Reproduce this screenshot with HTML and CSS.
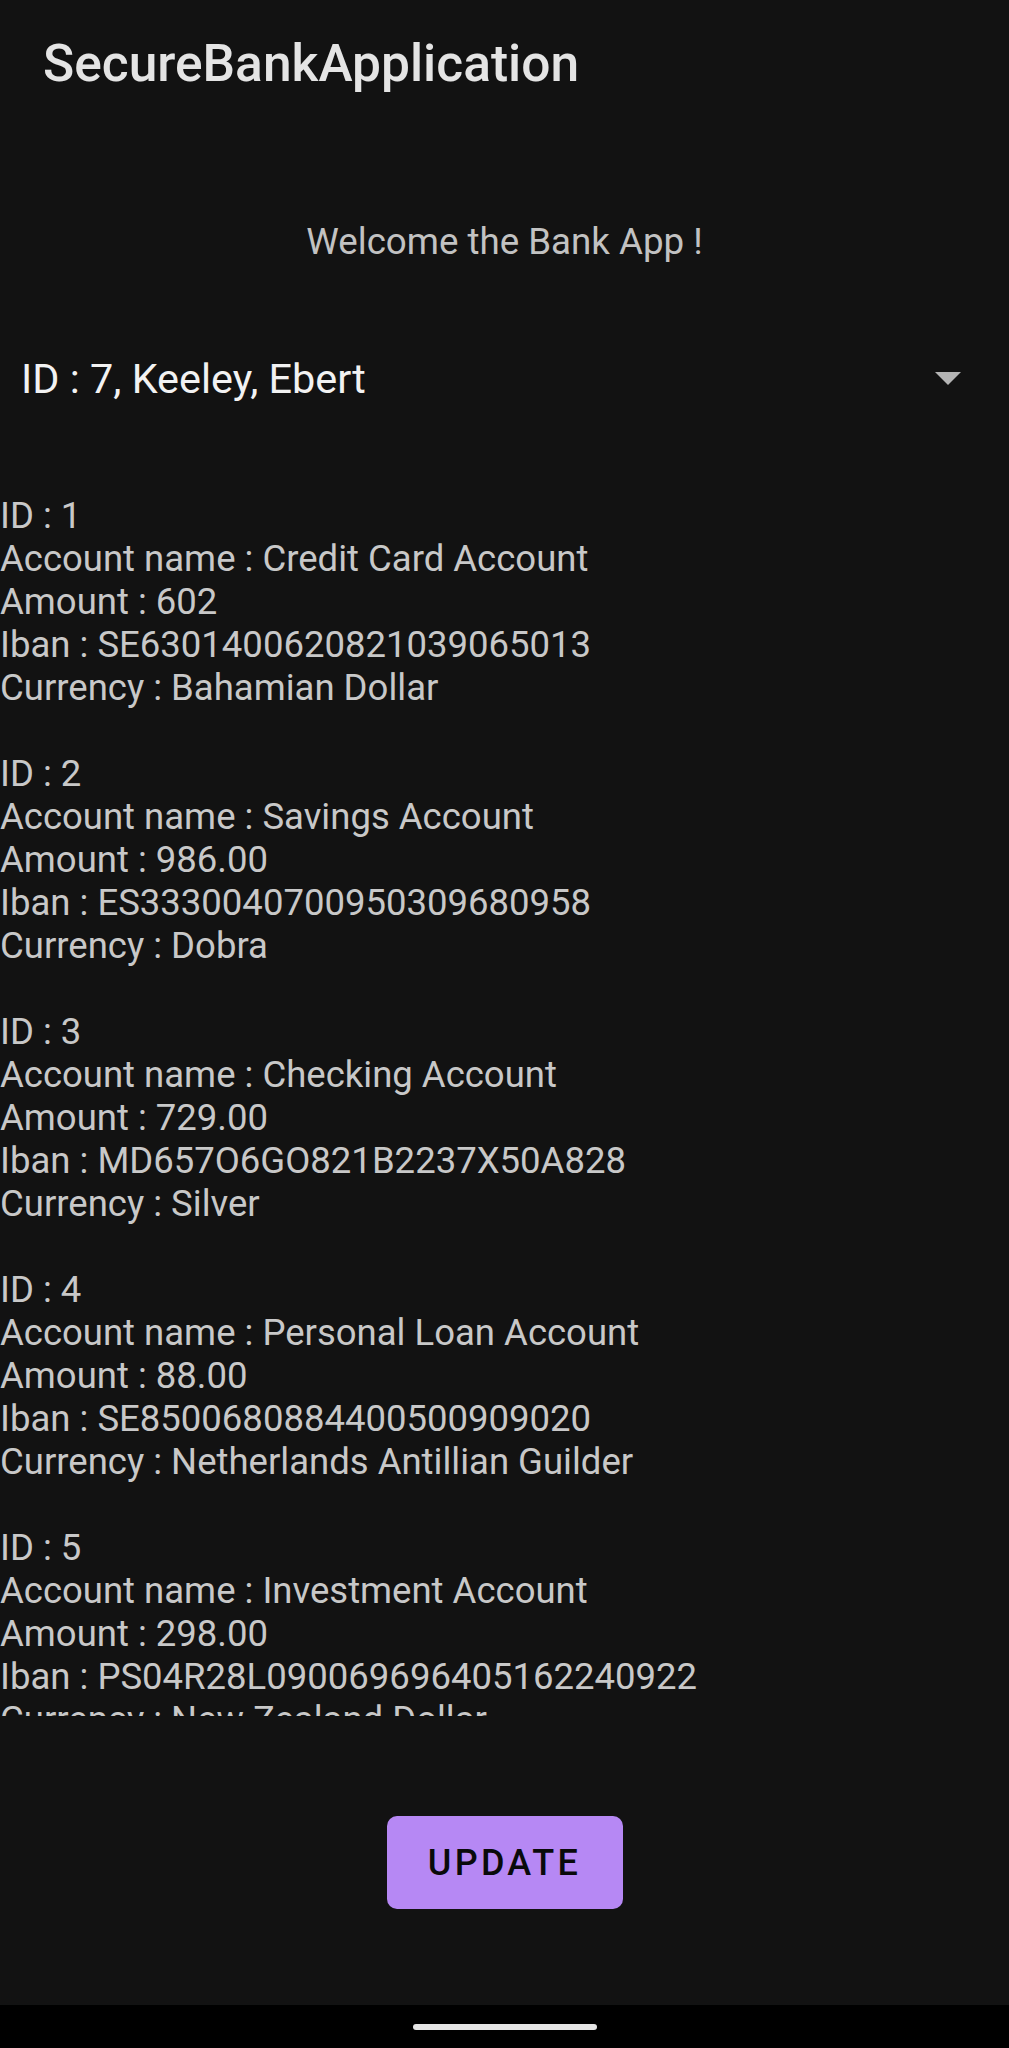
FILE: index.html
```html
<!DOCTYPE html>
<html lang="en">
<head>
<meta charset="utf-8">
<title>SecureBankApplication</title>
<link rel="stylesheet" href="styles.css">
</head>
<body>
<div class="screen">
  <header class="appbar"><h1 class="title">SecureBankApplication</h1></header>
  <p class="welcome">Welcome the Bank App !</p>
  <div class="spinner">
    <span class="spinner-text">ID : 7, Keeley, Ebert</span>
    <svg class="spinner-arrow" width="26" height="13" viewBox="0 0 26 13"><path d="M0 0 H26 L13 13 Z" fill="#b4b4b4"/></svg>
  </div>
  <div class="accounts">
    <div class="account">
      <div>ID : 1</div>
      <div>Account name : Credit Card Account</div>
      <div>Amount : 602</div>
      <div>Iban : SE6301400620821039065013</div>
      <div>Currency : Bahamian Dollar</div>
    </div>
    <div class="account">
      <div>ID : 2</div>
      <div>Account name : Savings Account</div>
      <div>Amount : 986.00</div>
      <div>Iban : ES3330040700950309680958</div>
      <div>Currency : Dobra</div>
    </div>
    <div class="account">
      <div>ID : 3</div>
      <div>Account name : Checking Account</div>
      <div>Amount : 729.00</div>
      <div>Iban : MD657O6GO821B2237X50A828</div>
      <div>Currency : Silver</div>
    </div>
    <div class="account">
      <div>ID : 4</div>
      <div>Account name : Personal Loan Account</div>
      <div>Amount : 88.00</div>
      <div>Iban : SE8500680884400500909020</div>
      <div>Currency : Netherlands Antillian Guilder</div>
    </div>
    <div class="account">
      <div>ID : 5</div>
      <div>Account name : Investment Account</div>
      <div>Amount : 298.00</div>
      <div>Iban : PS04R28L090069696405162240922</div>
      <div>Currency : New Zealand Dollar</div>
    </div>
  </div>
  <div class="actions"><button class="update-btn" type="button">UPDATE</button></div>
  <div class="navbar"><span class="handle"></span></div>
</div>
</body>
</html>
```
FILE: styles.css
```css
html, body {
  margin: 0;
  padding: 0;
  background: #121212;
}
body {
  font-family: Roboto, "Noto Sans", sans-serif;
}
.screen {
  width: 1009px;
  height: 2048px;
  display: flex;
  flex-direction: column;
  background: #121212;
}
.appbar {
  height: 127px;
  display: flex;
  align-items: center;
  padding-left: 43px;
}
.title {
  margin: 0;
  font-size: 51.5px;
  line-height: 57px;
  font-weight: 500;
  color: #e4e4e4;
}
.welcome {
  margin: 93px 0 0;
  text-align: center;
  font-size: 36.7px;
  line-height: 43px;
  color: #c2c2c2;
}
.spinner {
  margin-top: 92px;
  height: 48px;
  display: flex;
  align-items: center;
  justify-content: space-between;
  padding: 0 48px 0 21px;
}
.spinner-text {
  font-size: 41.4px;
  line-height: 48px;
  color: #f2f2f2;
}
.spinner-arrow {
  display: block;
}
.accounts {
  margin-top: 91px;
  height: 1223px;
  overflow: hidden;
  font-size: 36.5px;
  line-height: 43px;
  color: #c8c8c8;
}
.account {
  margin-bottom: 43px;
}
.actions {
  margin-top: 100px;
  display: flex;
  justify-content: center;
}
.update-btn {
  width: 236px;
  height: 93px;
  border: none;
  border-radius: 10px;
  background: #b688f4;
  color: #0a0a0a;
  font-family: Roboto, "Noto Sans", sans-serif;
  font-size: 36px;
  font-weight: 500;
  letter-spacing: 3.3px;
  padding: 0;
}
.navbar {
  margin-top: 96px;
  height: 43px;
  background: #000;
  display: flex;
  align-items: center;
  justify-content: center;
}
.handle {
  width: 184px;
  height: 6px;
  border-radius: 3px;
  background: #e6e6e6;
}
```
